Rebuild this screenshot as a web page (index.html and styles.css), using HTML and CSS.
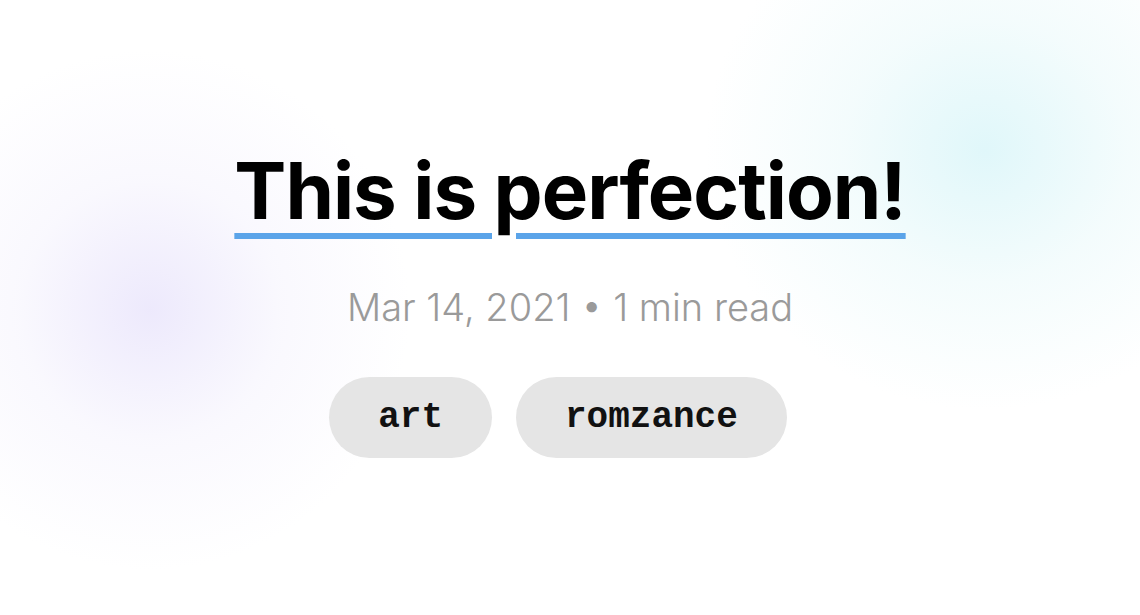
FILE: index.html
```html
<!DOCTYPE html>
<html lang="en">
<head>
<meta charset="utf-8">
<title>This is perfection!</title>
<link rel="stylesheet" href="styles.css">
</head>
<body>
<main class="page">
  <header class="post-header">
    <h1 class="post-title">This is perfection!</h1>
    <p class="post-meta">Mar 14, 2021 • 1 min read</p>
    <ul class="tags">
      <li class="tag">art</li>
      <li class="tag">romzance</li>
    </ul>
  </header>
</main>
</body>
</html>
```

FILE: styles.css
```css
* { box-sizing: border-box; }
html, body { margin: 0; padding: 0; }
body {
  width: 1140px;
  height: 615px;
  overflow: hidden;
  background:
    radial-gradient(ellipse 260px 260px at 150px 310px, rgba(236, 232, 252, 0.95), rgba(244, 242, 253, 0.5) 50%, rgba(255,255,255,0) 100%),
    radial-gradient(ellipse 280px 260px at 985px 150px, rgba(224, 247, 250, 1), rgba(236, 250, 251, 0.6) 50%, rgba(255,255,255,0) 100%),
    #ffffff;
  font-family: Inter, "Noto Sans", sans-serif;
}
.page {
  height: 615px;
  display: flex;
  align-items: center;
  justify-content: center;
}
.post-header {
  display: flex;
  flex-direction: column;
  align-items: center;
  padding-bottom: 14px;
}
.post-title {
  margin: 0;
  font-family: Inter, sans-serif;
  font-weight: 700;
  font-size: 78px;
  line-height: 96px;
  letter-spacing: -1px;
  color: #000;
  text-decoration: underline;
  text-decoration-color: #5ba4e9;
  text-decoration-thickness: 6px;
  text-underline-offset: 14px;
  text-decoration-skip-ink: auto;
}
.post-meta {
  margin: 46px 0 0;
  font-family: Inter, sans-serif;
  font-weight: 300;
  font-size: 38px;
  line-height: 44px;
  color: #9a9a9a;
}
.tags {
  list-style: none;
  margin: 48px 0 0;
  padding: 0;
  display: flex;
}
.tag {
  height: 81px;
  padding: 0 49px;
  margin-right: 24px;
  display: flex;
  align-items: center;
  border-radius: 41px;
  background: #e5e5e5;
  font-family: "Liberation Mono", monospace;
  font-weight: 700;
  font-size: 36px;
  color: #111;
}
```
